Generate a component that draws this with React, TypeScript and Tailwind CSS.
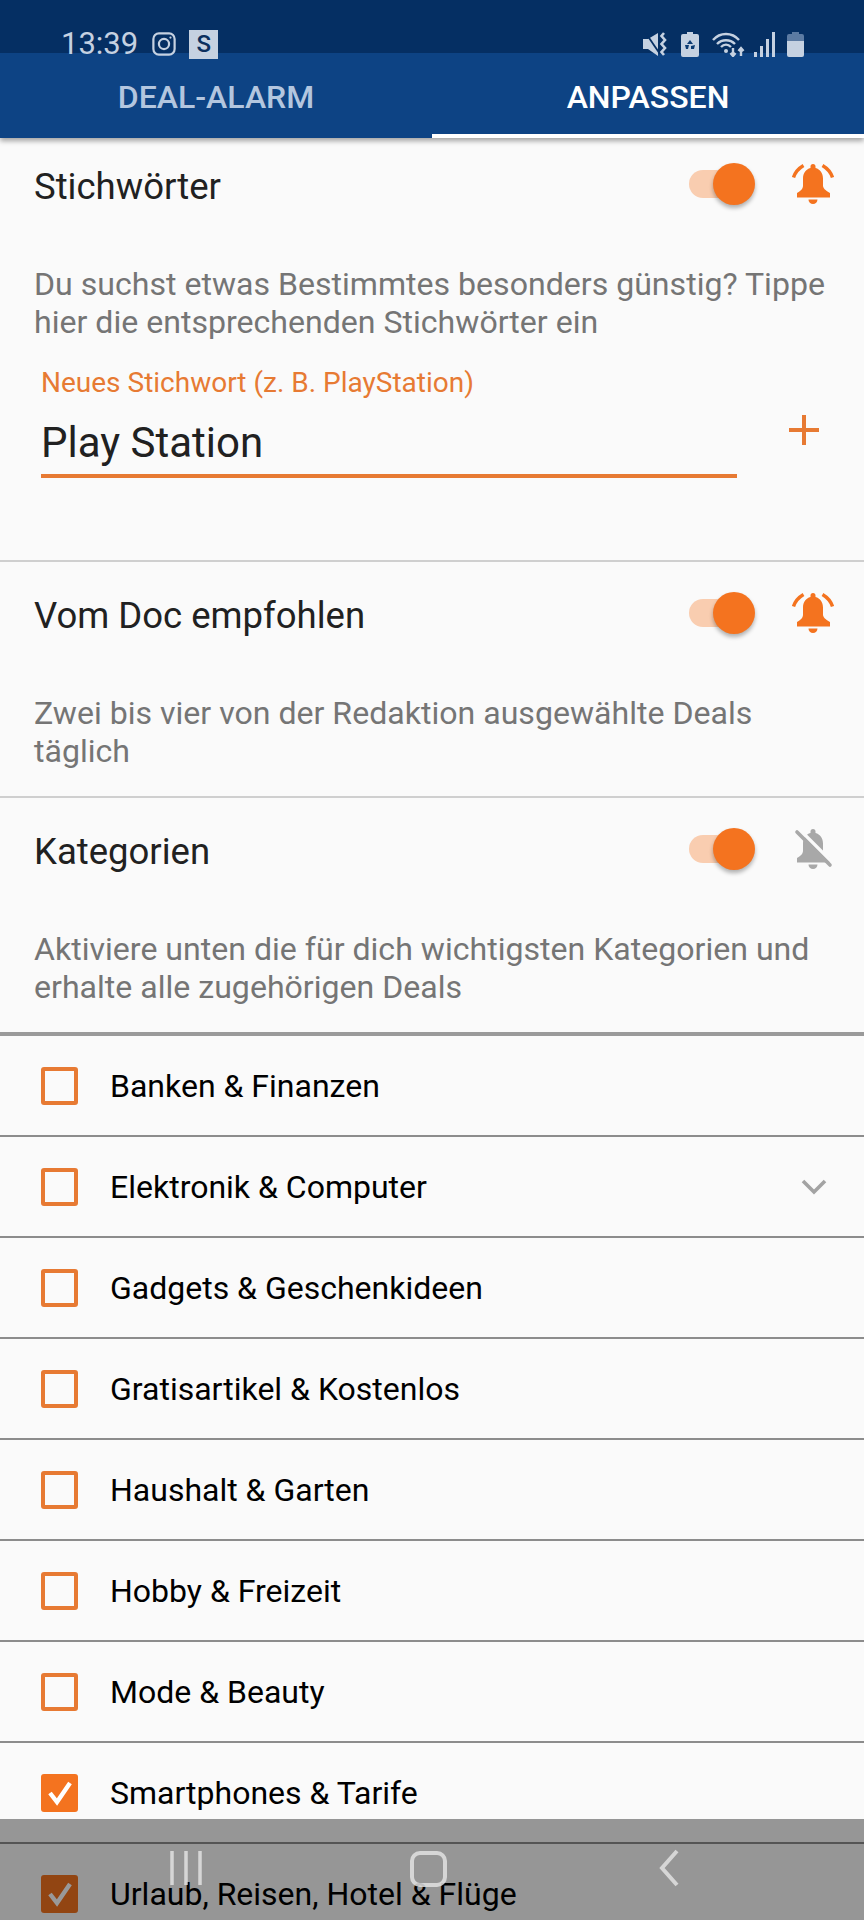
import React from "react";

const BELL_BODY =
  "M21 1a2.500 2.500 0 0 1 2.500 2.500v1.500c4.700 1.300 7.500 5.300 7.500 10.500v7c0 2.400 2 4.800 7 7.500v4.500H5V30c5-2.700 6-5.100 6-7.500v-7C11 10.300 13.800 6.300 18.500 5V3.500A2.500 2.500 0 0 1 21 1z";

const Toggle = () => (
  <div className="relative w-[66px] h-[42px] flex items-center">
    <div className="w-[60px] h-[28px] rounded-full bg-[#f9cdb0]" />
    <div className="absolute right-0 top-0 w-[42px] h-[42px] rounded-full bg-[#f4731f] shadow-[0_3px_4px_rgba(0,0,0,0.3)]" />
  </div>
);

const Bell = () => (
  <svg width="42" height="42" viewBox="0 0 42 42" fill="#f4731f">
    <path d={BELL_BODY} />
    <path d="M16.500 36.500h9a4.500 4.500 0 0 1-9 0z" />
    <path d="M11.500 2.500C6.500 5.500 3 9.500 1.500 14.500" fill="none" stroke="#f4731f" strokeWidth="3.400" />
    <path d="M30.500 2.500c5 3 8.500 7 10 12" fill="none" stroke="#f4731f" strokeWidth="3.400" />
  </svg>
);

const BellOff = () => (
  <svg width="42" height="42" viewBox="0 0 42 42" fill="#a8a8a8">
    <path d={BELL_BODY} />
    <path d="M16.500 36.500h9a4.500 4.500 0 0 1-9 0z" />
    <path d="M7.500 1.500l33 33" stroke="#fafafa" strokeWidth="3.400" />
    <path d="M5 4l33 33" stroke="#a8a8a8" strokeWidth="3.600" strokeLinecap="round" />
  </svg>
);

const Check = ({ checked }: { checked?: boolean }) =>
  checked ? (
    <div className="w-[37px] h-[38px] rounded-[3px] bg-[#f4731f] flex items-center justify-center shrink-0">
      <svg width="30" height="30" viewBox="0 0 30 30" fill="none" stroke="#fff" strokeWidth="4.400">
        <path d="M5 15l7 9L25 5" />
      </svg>
    </div>
  ) : (
    <div className="w-[37px] h-[38px] rounded-[3px] border-[4px] border-[#e77a33] shrink-0" />
  );

const Section = ({ title, desc, off }: { title: string; desc: string; off?: boolean }) => (
  <div>
    <div className="flex items-center h-[46px] pr-[30px]">
      <div className="flex-1 mt-[5px] text-[36.5px] leading-[46px] text-[#212121]">{title}</div>
      <Toggle />
      <div className="ml-[37px]">{off ? <BellOff /> : <Bell />}</div>
    </div>
    <p className="mt-[58px] mr-[28px] text-[32.1px] leading-[38px] text-[#757575]">{desc}</p>
  </div>
);

const rows: { t: string; c?: boolean; chev?: boolean }[] = [
  { t: "Banken & Finanzen" },
  { t: "Elektronik & Computer", chev: true },
  { t: "Gadgets & Geschenkideen" },
  { t: "Gratisartikel & Kostenlos" },
  { t: "Haushalt & Garten" },
  { t: "Hobby & Freizeit" },
  { t: "Mode & Beauty" },
  { t: "Smartphones & Tarife", c: true },
  { t: "Urlaub, Reisen, Hotel & Flüge", c: true },
];

export default function App() {
  return (
    <div className="relative w-[864px] h-[1920px] overflow-hidden bg-[#fafafa] font-['Roboto',sans-serif]">
      <div className="relative z-10 shadow-[0_3px_5px_rgba(0,0,0,0.35)]">
        <div className="h-[53px] bg-[#052f63]" />
        <div className="flex h-[85px] bg-[#0d4384]">
          <div className="w-1/2 flex items-center justify-center text-[32px] font-medium text-[#b3c6df] pt-[3px]">DEAL-ALARM</div>
          <div className="w-1/2 flex items-center justify-center text-[32px] font-medium text-white border-b-[4px] border-white pt-[6px]">ANPASSEN</div>
        </div>
      </div>

      <div className="absolute left-0 top-0 w-full h-[60px] z-20 flex items-center pl-[61px] pr-[60px] pt-[28px] text-[#c5d1e1]">
        <span className="text-[31px] leading-[32px]">13:39</span>
        <svg className="ml-[14px]" width="24" height="24" viewBox="0 0 26 26" fill="none" stroke="#c5d1e1" strokeWidth="2.400">
          <rect x="1.500" y="1.500" width="23" height="23" rx="6" />
          <circle cx="13" cy="13" r="5.500" />
          <circle cx="20" cy="6" r="1.200" fill="#c5d1e1" stroke="none" />
        </svg>
        <span className="ml-[13px] w-[29px] h-[29px] bg-[#c5d1e1] text-[#0b2f5e] flex items-center justify-center text-[24px] font-medium">S</span>
        <div className="ml-auto flex items-center">
          <svg width="25" height="25" viewBox="0 0 25 25" fill="#c5d1e1">
            <path d="M0 7h5l10-6v23L5 17H0z" />
            <path d="M2 0l15 22" stroke="#052f63" strokeWidth="1.800" />
            <path d="M21 1l-2.500 3 3.500 4-3.500 4 3.500 4-3.500 4 2.500 3" fill="none" stroke="#c5d1e1" strokeWidth="2.600" />
          </svg>
          <svg className="ml-[13px]" width="18" height="25" viewBox="0 0 18 25" fill="#c5d1e1">
            <path d="M6 0h6v2h4a2 2 0 0 1 2 2v19a2 2 0 0 1-2 2H2a2 2 0 0 1-2-2V4a2 2 0 0 1 2-2h4z" />
            <path d="M9 8l3 4H6zM4 13h4l-1 4H5zM14 13l-1 4h-3v-3z" fill="#0b3a72" />
          </svg>
          <svg className="ml-[13px]" width="33" height="25" viewBox="0 0 33 25" fill="none" stroke="#c5d1e1" strokeWidth="2.400">
            <path d="M1 8c7-8 19-8 26 0" />
            <path d="M5 12c5-5 13-5 18 0" />
            <path d="M9 15c3-3 7-3 10 0" />
            <circle cx="14" cy="19" r="2" fill="#c5d1e1" stroke="none" />
            <path d="M21 16v8m-2.500-3l2.500 3 2.500-3M29 24v-8m-2.500 3l2.500-3 2.500 3" />
          </svg>
          <svg className="ml-[9px]" width="22" height="25" viewBox="0 0 22 25" fill="#c5d1e1">
            <rect x="0" y="20" width="3" height="5" />
            <rect x="6" y="14" width="3" height="11" />
            <rect x="12" y="7" width="3" height="18" />
            <rect x="18" y="0" width="3" height="25" />
          </svg>
          <svg className="ml-[11px]" width="17" height="25" viewBox="0 0 17 25">
            <path d="M5 0h7v2h3a2 2 0 0 1 2 2v5H0V4a2 2 0 0 1 2-2h3z" fill="#5c7ba3" />
            <path d="M0 9h17v14a2 2 0 0 1-2 2H2a2 2 0 0 1-2-2z" fill="#c5d1e1" />
          </svg>
        </div>
      </div>

      <div className="pl-[34px] pt-[23px] h-[424px] border-b-[2px] border-[#cfcfcf]">
        <Section
          title="Stichwörter"
          desc="Du suchst etwas Bestimmtes besonders günstig? Tippe hier die entsprechenden Stichwörter ein"
        />
        <div className="flex mt-[26px] pr-[28px]">
          <div className="ml-[7px] w-[696px] border-b-[4px] border-[#e77a33] h-[111px]">
            <div className="text-[28px] leading-[32px] text-[#e77a33]">Neues Stichwort (z. B. PlayStation)</div>
            <div className="mt-[20px] text-[42px] leading-[48px] text-[#212121]">Play Station</div>
          </div>
          <svg className="ml-[52px] mt-[48px]" width="30" height="30" viewBox="0 0 30 30" stroke="#e77a33" strokeWidth="4">
            <path d="M15 0v30M0 15h30" />
          </svg>
        </div>
      </div>

      <div className="pl-[34px] pt-[28px] h-[236px] border-b-[2px] border-[#cfcfcf]">
        <Section title="Vom Doc empfohlen" desc="Zwei bis vier von der Redaktion ausgewählte Deals täglich" />
      </div>
      <div className="pl-[34px] pt-[28px] h-[238px] border-b-[4px] border-[#9a9a9a]">
        <Section title="Kategorien" off desc="Aktiviere unten die für dich wichtigsten Kategorien und erhalte alle zugehörigen Deals" />
      </div>

      {rows.map((r) => (
        <div key={r.t} className="h-[101px] flex items-center pl-[41px] pr-[37px] border-b-[2px] border-[#8c8c8c]">
          <Check checked={r.c} />
          <span className="ml-[32px] text-[32px] text-black flex-1">{r.t}</span>
          {r.chev && (
            <svg width="26" height="16" viewBox="0 0 26 16" fill="none" stroke="#a3a3a3" strokeWidth="3.600">
              <path d="M2 2l11 11L24 2" />
            </svg>
          )}
        </div>
      ))}

      <div className="absolute left-0 bottom-0 w-full h-[101px] z-30 bg-black/40">
        <svg className="absolute left-[170px] top-[32px]" width="32" height="34" viewBox="0 0 32 34" stroke="#e2e2e2" strokeWidth="3.500" opacity="0.85">
          <path d="M2 0v34M16 0v34M30 0v34" />
        </svg>
        <div className="absolute left-[410px] top-[32px] w-[37px] h-[36px] rounded-[10px] border-[4px] border-[#e2e2e2] opacity-85" />
        <svg className="absolute left-[658px] top-[30px]" width="22" height="38" viewBox="0 0 22 38" fill="none" stroke="#e2e2e2" strokeWidth="4" opacity="0.85">
          <path d="M19 2L4 19l15 17" />
        </svg>
      </div>
    </div>
  );
}
